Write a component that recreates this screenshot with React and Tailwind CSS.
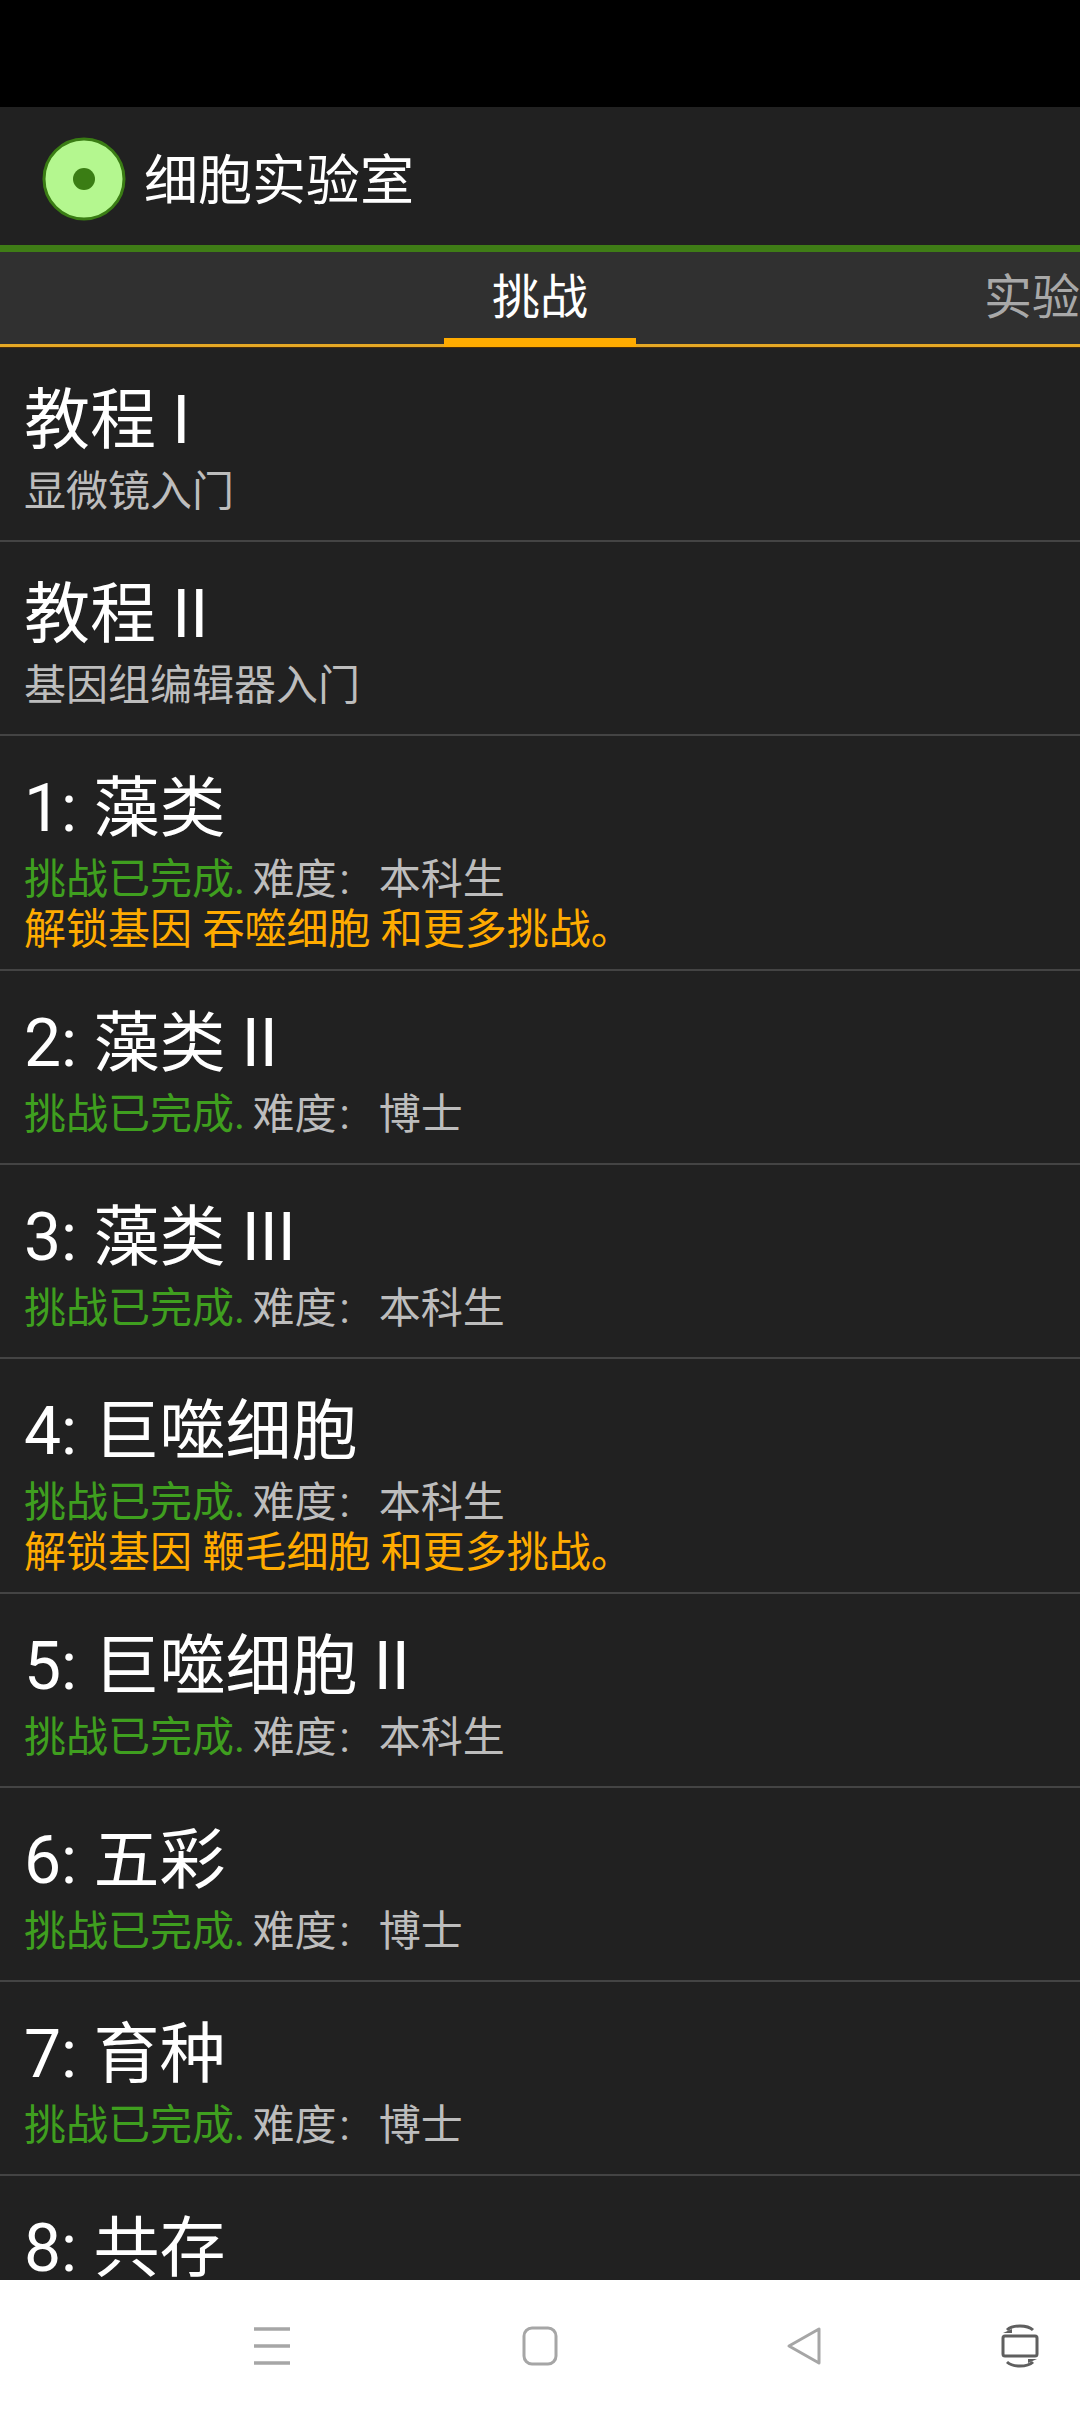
const challenges = [
  { title: '教程 I', sub: '显微镜入门' },
  { title: '教程 II', sub: '基因组编辑器入门' },
  { title: '1: 藻类', level: '本科生', unlock: '解锁基因 吞噬细胞 和更多挑战。' },
  { title: '2: 藻类 II', level: '博士' },
  { title: '3: 藻类 III', level: '本科生' },
  { title: '4: 巨噬细胞', level: '本科生', unlock: '解锁基因 鞭毛细胞 和更多挑战。' },
  { title: '5: 巨噬细胞 II', level: '本科生' },
  { title: '6: 五彩', level: '博士' },
  { title: '7: 育种', level: '博士' },
  { title: '8: 共存' },
];

function ChallengeRow({ item }) {
  return (
    <div className="border-b-[2px] border-[#444444] pl-[24px] pt-[26px] pb-[15px]">
      <div className="text-[66px] leading-[93px] text-white">{item.title}</div>
      <div className="min-h-[58px]">
        {item.sub && <div className="text-[42px] leading-[50px] text-[#bdbdbd]">{item.sub}</div>}
        {item.level && (
          <div className="text-[42px] leading-[50px] text-[#bdbdbd]">
            <span className="mr-[-3px] text-[#3f9f1f]">挑战已完成.</span> 难度
            <span className="ml-[3px] mr-[29px]">:</span>
            {item.level}
          </div>
        )}
        {item.unlock && <div className="text-[42px] leading-[49px] text-[#ffab00]">{item.unlock}</div>}
      </div>
    </div>
  );
}

function NavBar() {
  return (
    <div className="flex h-[132px] shrink-0 items-center bg-white pl-[252px]">
      <svg width="40" height="40" viewBox="0 0 40 40" className="mr-[228px]">
        <path d="M2 3h36M2 20h36M2 37h36" stroke="#a6a6a6" strokeWidth="3.5" fill="none" />
      </svg>
      <svg width="40" height="40" viewBox="0 0 40 40" className="mr-[225px]">
        <rect x="4" y="2" width="32" height="36" rx="8" stroke="#a6a6a6" strokeWidth="3" fill="none" />
      </svg>
      <svg width="40" height="40" viewBox="0 0 40 40" className="mr-[175px]">
        <path d="M34 3v34L4 20z" stroke="#a6a6a6" strokeWidth="3" strokeLinejoin="round" fill="none" />
      </svg>
      <svg width="40" height="50" viewBox="0 0 40 50">
        <rect x="3" y="15" width="34" height="20" rx="2" stroke="#5f5f5f" strokeWidth="3" fill="none" />
        <path d="M7 9a15 8 0 0 1 26 0M33 41a15 8 0 0 1-26 0" stroke="#5f5f5f" strokeWidth="3" fill="none" />
        <path d="M3 12l9-4v4zM37 38l-9 4v-4z" fill="#5f5f5f" />
      </svg>
    </div>
  );
}

export default function App() {
  return (
    <div className="flex h-[2412px] w-[1080px] flex-col overflow-hidden bg-black font-['Roboto','Noto_Sans_CJK_SC',sans-serif]">
      <div className="h-[107px] shrink-0 bg-black" />

      {/* action bar */}
      <div className="flex h-[138px] shrink-0 items-center bg-[#212121] pl-[42px] pt-[6px]">
        <svg width="84" height="84" viewBox="0 0 84 84" className="mr-[18px]">
          <circle cx="42" cy="42" r="40" fill="#b4f78f" stroke="#3a7d14" strokeWidth="3" />
          <circle cx="42" cy="42" r="11" fill="#3a7d14" />
        </svg>
        <span className="pt-[4px] text-[54px] text-white">细胞实验室</span>
      </div>
      <div className="h-[7px] shrink-0 bg-[#3f7d16]" />

      {/* tabs */}
      <div className="flex h-[92px] shrink-0 overflow-hidden bg-[#303030] pl-[444px]">
        <div className="flex h-full w-[192px] shrink-0 items-center justify-center text-[48px] leading-none text-white">
          挑战
        </div>
        <div className="ml-[348px] flex h-full shrink-0 items-center text-[48px] leading-none text-[#a8a8a8]">
          实验
        </div>
      </div>
      <div className="relative h-[4px] shrink-0 border-b-[1px] border-[#4a2c08] bg-[#e5a825]">
        {/* selected tab indicator sits over the tab strip line */}
        <div className="absolute bottom-0 left-[444px] h-[9px] w-[192px] bg-[#ffab00]" />
      </div>

      {/* challenge list */}
      <div className="min-h-0 flex-1 overflow-hidden bg-[#212121]">
        {challenges.map((item) => (
          <ChallengeRow key={item.title} item={item} />
        ))}
      </div>

      <NavBar />
    </div>
  );
}
